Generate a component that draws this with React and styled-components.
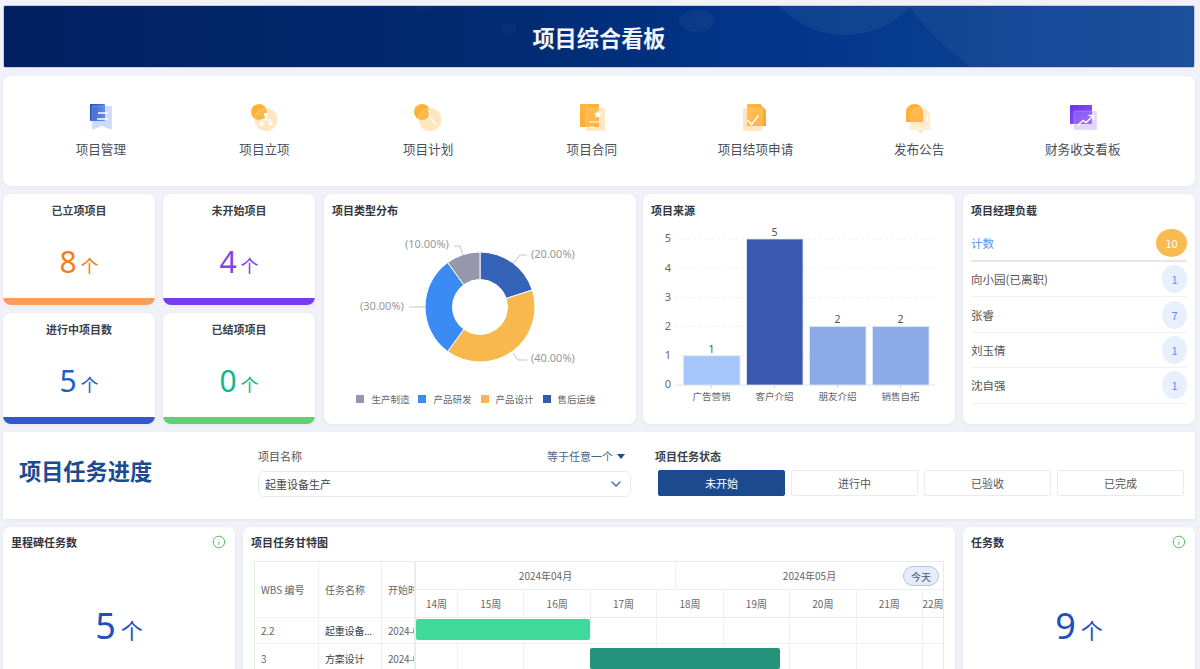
import React from 'react';
import styled, { createGlobalStyle } from 'styled-components';
import { Info, ChevronDown } from 'lucide-react';

const FONT = '"Noto Sans CJK SC", "Noto Sans", sans-serif';

const GlobalStyle = createGlobalStyle`
  html, body { margin: 0; padding: 0; height: 100%; overflow: hidden; background: #f0f2f8; }
  body { font-family: ${FONT}; color: #333; }
  * { box-sizing: border-box; }
`;

/* ---------- data ---------- */
const STATS = [
  { title: '已立项项目', value: 8, color: '#f97a1c', bar: '#f99d5c' },
  { title: '未开始项目', value: 4, color: '#7c45e8', bar: '#7c3aed' },
  { title: '进行中项目数', value: 5, color: '#2260c8', bar: '#3358c9' },
  { title: '已结项项目', value: 0, color: '#10b791', bar: '#62cf74' },
];

const SLICES = [
  { share: 0.2, color: '#3563b8' },
  { share: 0.4, color: '#f8b84e' },
  { share: 0.3, color: '#3b8bf5' },
  { share: 0.1, color: '#9696ad' },
];

const PIE_LABELS = [
  { text: '(20.00%)', x: 208, y: 31, line: '190,40 197,31 204,31' },
  { text: '(40.00%)', x: 208, y: 135, line: '190,129 195,136 204,136' },
  { text: '(30.00%)', x: 37, y: 83, line: '86,83 102,83' },
  { text: '(10.00%)', x: 82, y: 21, line: '131,22 137,22 140,31' },
];

const LEGEND = [
  { label: '生产制造', color: '#9696ad' },
  { label: '产品研发', color: '#3b8bf5' },
  { label: '产品设计', color: '#f8b84e' },
  { label: '售后运维', color: '#2f5bb0' },
];

const SOURCES = [
  { label: '广告营销', value: 1, color: '#a6c6fb' },
  { label: '客户介绍', value: 5, color: '#3a58b0' },
  { label: '朋友介绍', value: 2, color: '#8eabe9' },
  { label: '销售自拓', value: 2, color: '#8eabe9' },
];

const MANAGERS = [
  { name: '向小园(已离职)', count: 1 },
  { name: '张睿', count: 7 },
  { name: '刘玉倩', count: 1 },
  { name: '沈自强', count: 1 },
];

const WEEKS = ['14周', '15周', '16周', '17周', '18周', '19周', '20周', '21周', '22周'];

const TASKS = [
  { wbs: '2.2', name: '起重设备...', start: '2024-04-01', left: 0, width: 174, color: '#3fd99b' },
  { wbs: '3', name: '方案设计', start: '2024-04-29', left: 174, width: 190, color: '#24937c' },
];

/* ---------- icons ---------- */
const Svg = styled.svg`
  display: block;
  width: 32px;
  height: 32px;
`;

const OrangeGrad = ({ id }) => (
  <linearGradient id={id} x1="0" y1="0" x2="1" y2="1">
    <stop offset="0" stopColor="#ffb83c" />
    <stop offset="1" stopColor="#ffa526" />
  </linearGradient>
);

// pale shape under the solid one, then a faint copy on top for the frosted look
const Glass = ({ children }) => (
  <g fill="#fff" fillOpacity="0.14" stroke="#fff" strokeOpacity="0.4" strokeWidth="0.6">{children}</g>
);

const ManageIcon = () => (
  <Svg viewBox="0 0 32 32">
    <defs>
      <linearGradient id="blueDoc" x1="0" y1="0" x2="1" y2="0">
        <stop offset="0" stopColor="#2350c0" />
        <stop offset="1" stopColor="#4a7ae6" />
      </linearGradient>
    </defs>
    <path d="M7 4H27V28L17 24L7 28Z" fill="#c6d6fb" />
    <rect x="5" y="2" width="15" height="17" rx="0.8" fill="url(#blueDoc)" />
    <Glass><path d="M7 4H27V28L17 24L7 28Z" /></Glass>
    <path d="M13 11H23M12 17H23" stroke="#fff" strokeWidth="1.3" />
  </Svg>
);

const ApprovalIcon = () => (
  <Svg viewBox="0 0 32 32">
    <defs><OrangeGrad id="orangeA" /></defs>
    <circle cx="18" cy="17.5" r="11.5" fill="#ffe2b4" />
    <circle cx="11" cy="10" r="8" fill="url(#orangeA)" />
    <Glass><circle cx="18" cy="17.5" r="11.5" /></Glass>
    <path d="M18 14V18M13.5 21V18H22.5V21" stroke="#fff" strokeWidth="1.2" fill="none" />
    <rect x="16" y="11" width="4" height="3.6" rx="0.8" fill="#fff" />
    <rect x="11.5" y="20" width="4" height="3.4" rx="0.8" fill="#fff" />
    <rect x="20.5" y="20" width="4" height="3.4" rx="0.8" fill="#fff" />
  </Svg>
);

const PlanIcon = () => (
  <Svg viewBox="0 0 32 32">
    <defs><OrangeGrad id="orangeB" /></defs>
    <circle cx="18" cy="17.5" r="11.5" fill="#ffe2b4" />
    <circle cx="10" cy="10" r="8" fill="url(#orangeB)" />
    <Glass><circle cx="18" cy="17.5" r="11.5" /></Glass>
    <path d="M17 8L18 16L24 22" stroke="#fff" strokeWidth="1.5" fill="none" strokeLinecap="round" />
  </Svg>
);

const ContractIcon = () => (
  <Svg viewBox="0 0 32 32">
    <defs><OrangeGrad id="orangeC" /></defs>
    <rect x="10" y="6" width="19" height="23" rx="1" fill="#ffe2b4" />
    <rect x="4" y="2" width="19" height="23" rx="0.8" fill="url(#orangeC)" />
    <Glass><rect x="10" y="6" width="19" height="23" rx="1" /></Glass>
    <path d="M22 8l1.2 2.7 3 .3-2.2 2 .6 2.9-2.6-1.5-2.6 1.5.6-2.9-2.2-2 3-.3z" fill="#fff" />
    <path d="M13 20H25M13 25H18" stroke="#fff" strokeWidth="1.2" />
  </Svg>
);

const ClosureIcon = () => (
  <Svg viewBox="0 0 32 32">
    <defs><OrangeGrad id="orangeD" /></defs>
    <rect x="4" y="6" width="19" height="23" rx="1" fill="#ffe2b4" />
    <path d="M9 2H21L27 8V24H8V3Z" fill="url(#orangeD)" />
    <Glass><rect x="4" y="6" width="19" height="23" rx="1" /></Glass>
    <path d="M8.5 18L12.5 22.5L19.5 13.5" stroke="#fff" strokeWidth="1.5" fill="none" />
  </Svg>
);

const NoticeIcon = () => (
  <Svg viewBox="0 0 32 32">
    <defs><OrangeGrad id="orangeE" /></defs>
    <path d="M8 26V14a9.5 9 0 0 1 19 0V26Z" fill="#ffe8c4" />
    <path d="M3 20V10a8.5 8 0 0 1 17 0V20Z" fill="url(#orangeE)" />
    <Glass><path d="M8 26V14a9.5 9 0 0 1 19 0V26Z" /></Glass>
    <circle cx="18" cy="28.5" r="2.6" fill="#fde9c8" />
    <rect x="6" y="24" width="23" height="4" rx="2" fill="#fdeed6" />
    <path d="M24 14V20" stroke="#fff" strokeWidth="1.3" />
  </Svg>
);

const FinanceIcon = () => (
  <Svg viewBox="0 0 32 32">
    <defs>
      <linearGradient id="purpleDoc" x1="0" y1="0" x2="1" y2="1">
        <stop offset="0" stopColor="#6a2ff2" />
        <stop offset="1" stopColor="#8d5cf8" />
      </linearGradient>
    </defs>
    <rect x="7" y="9" width="23" height="19" rx="1" fill="#dccffb" />
    <rect x="3" y="3" width="22" height="19" rx="0.8" fill="url(#purpleDoc)" />
    <Glass><rect x="7" y="9" width="23" height="19" rx="1" /></Glass>
    <path d="M10.5 23.5L16 18.5L19 20.5L26 14M21.5 13.5H26.5V18" stroke="#fff" strokeWidth="1.5" fill="none" />
  </Svg>
);

const NAV = [
  { label: '项目管理', Icon: ManageIcon },
  { label: '项目立项', Icon: ApprovalIcon },
  { label: '项目计划', Icon: PlanIcon },
  { label: '项目合同', Icon: ContractIcon },
  { label: '项目结项申请', Icon: ClosureIcon },
  { label: '发布公告', Icon: NoticeIcon },
  { label: '财务收支看板', Icon: FinanceIcon },
];

/* ---------- charts ---------- */
const slicePath = (cx, cy, r, r0, from, to) => {
  const pt = (rad, a) => `${cx + rad * Math.sin(a)} ${cy - rad * Math.cos(a)}`;
  const large = to - from > Math.PI ? 1 : 0;
  return `M${pt(r, from)}A${r} ${r} 0 ${large} 1 ${pt(r, to)}L${pt(r0, to)}A${r0} ${r0} 0 ${large} 0 ${pt(r0, from)}Z`;
};

const DonutChart = () => {
  let angle = 0;
  return (
    <ChartSvg viewBox="0 0 312 166" $height={166} $left={-9}>
      {SLICES.map(s => {
        const from = angle;
        angle += s.share * Math.PI * 2;
        return <path key={s.color} d={slicePath(157, 83, 55, 27.5, from, angle)} fill={s.color} stroke="#fff" strokeWidth="1" />;
      })}
      {PIE_LABELS.map(l => (
        <g key={l.text}>
          <polyline points={l.line} fill="none" stroke="#c4c4c8" strokeWidth="1" />
          <text x={l.x} y={l.y} fill="#999" fontSize="11" dominantBaseline="middle" fontFamily="Noto Sans">{l.text}</text>
        </g>
      ))}
    </ChartSvg>
  );
};

const BarChart = () => {
  const y0 = 161;
  const unit = 29.2;
  return (
    <ChartSvg viewBox="0 0 312 178" $height={178} $left={-8}>
      {[1, 2, 3, 4, 5].map(v => (
        <line key={v} x1="32" x2="292" y1={y0 - v * unit} y2={y0 - v * unit} stroke="#f0f0f4" strokeDasharray="3 3" />
      ))}
      <line x1="32" x2="292" y1={y0} y2={y0} stroke="#e2e4ec" />
      {[0, 1, 2, 3, 4, 5].map(v => (
        <text key={v} x="28" y={y0 - v * unit + 0.5} fill="#666" fontSize="11" textAnchor="end" dominantBaseline="middle" fontFamily="Noto Sans">{v}</text>
      ))}
      {SOURCES.map((s, i) => {
        const x = 40.5 + i * 63;
        const h = s.value * unit;
        return (
          <g key={s.label}>
            <rect x={x} y={y0 - h} width="56.5" height={h} fill={s.color} stroke="#dfe8fb" strokeWidth="0.8" />
            <line x1={x + 28} x2={x + 28} y1={y0} y2={y0 + 3} stroke="#d0d4de" />
            <text x={x + 28} y={y0 - h - 6} fill="#555" fontSize="10.5" textAnchor="middle" dominantBaseline="middle" fontFamily="Noto Sans">{s.value}</text>
            <text x={x + 28} y={y0 + 12} fill="#666" fontSize="9.5" textAnchor="middle" dominantBaseline="middle">{s.label}</text>
          </g>
        );
      })}
    </ChartSvg>
  );
};

const App = () => (
  <>
    <GlobalStyle />
    <Page>
      <Banner>
        <BannerTitle>项目综合看板</BannerTitle>
      </Banner>

      <NavCard>
        {NAV.map(({ label, Icon }) => (
          <NavItem key={label}>
            <Icon />
            <NavLabel>{label}</NavLabel>
          </NavItem>
        ))}
      </NavCard>

      <Overview>
        <StatGrid>
          {STATS.map(s => (
            <StatCard key={s.title}>
              <StatTitle>{s.title}</StatTitle>
              <StatBody $color={s.color}>
                <StatValue>{s.value}</StatValue>
                <StatUnit>个</StatUnit>
              </StatBody>
              <StatBar $color={s.bar} />
            </StatCard>
          ))}
        </StatGrid>

        <ChartCard $after={7}>
          <CardTitle>项目类型分布</CardTitle>
          <DonutChart />
          <Legend>
            {LEGEND.map(l => (
              <LegendItem key={l.label}>
                <Swatch $color={l.color} />
                {l.label}
              </LegendItem>
            ))}
          </Legend>
        </ChartCard>

        <ChartCard $after={8}>
          <CardTitle>项目来源</CardTitle>
          <BarChart />
        </ChartCard>

        <ManagerCard>
          <CardTitle>项目经理负载</CardTitle>
          <TotalRow>
            <TotalLabel>计数</TotalLabel>
            <TotalBadge>10</TotalBadge>
          </TotalRow>
          {MANAGERS.map(m => (
            <ManagerRow key={m.name}>
              <span>{m.name}</span>
              <CountBadge>{m.count}</CountBadge>
            </ManagerRow>
          ))}
        </ManagerCard>
      </Overview>

      <FilterPanel>
        <SectionTitle>项目任务进度</SectionTitle>
        <SelectBlock>
          <FieldHead>
            <FieldLabel>项目名称</FieldLabel>
            <MatchMode>等于任意一个<Triangle /></MatchMode>
          </FieldHead>
          <SelectBox>
            起重设备生产
            <ChevronDown size={16} color="#3d5f94" strokeWidth={1.8} />
          </SelectBox>
        </SelectBlock>
        <StatusBlock>
          <StatusLabel>项目任务状态</StatusLabel>
          <StatusButtons>
            <StatusButton $active>未开始</StatusButton>
            <StatusButton>进行中</StatusButton>
            <StatusButton>已验收</StatusButton>
            <StatusButton>已完成</StatusButton>
          </StatusButtons>
        </StatusBlock>
      </FilterPanel>

      <BottomRow>
        <TallCard>
          <TitleRow>
            <CardTitle>里程碑任务数</CardTitle>
            <Info size={14} color="#5dbb63" strokeWidth={1.7} />
          </TitleRow>
          <BigCount>
            <BigValue>5</BigValue>
            <BigUnit>个</BigUnit>
          </BigCount>
        </TallCard>

        <GanttCard>
          <CardTitle>项目任务甘特图</CardTitle>
          <GanttTable>
            <TaskColumns>
              <TaskHead>WBS 编号</TaskHead>
              <TaskHead>任务名称</TaskHead>
              <TaskHead>开始时间</TaskHead>
              {TASKS.map(t => (
                <React.Fragment key={t.wbs}>
                  <TaskCell>{t.wbs}</TaskCell>
                  <TaskCell $dark>{t.name}</TaskCell>
                  <TaskCell>{t.start}</TaskCell>
                </React.Fragment>
              ))}
            </TaskColumns>
            <Timeline>
              <MonthRow>
                <MonthCell>2024年04月</MonthCell>
                <MonthCell>
                  2024年05月
                  <TodayPill>今天</TodayPill>
                </MonthCell>
              </MonthRow>
              <WeekRow>
                {WEEKS.map(w => <WeekCell key={w}>{w}</WeekCell>)}
              </WeekRow>
              {TASKS.map(t => (
                <BarRow key={t.wbs}>
                  {WEEKS.map(w => <BarCell key={w} />)}
                  <TaskBar $left={t.left} $width={t.width} $color={t.color} />
                </BarRow>
              ))}
            </Timeline>
          </GanttTable>
        </GanttCard>

        <TallCard>
          <TitleRow>
            <CardTitle>任务数</CardTitle>
            <Info size={14} color="#5dbb63" strokeWidth={1.7} />
          </TitleRow>
          <BigCount>
            <BigValue>9</BigValue>
            <BigUnit>个</BigUnit>
          </BigCount>
        </TallCard>
      </BottomRow>
    </Page>
  </>
);

const Page = styled.div`
  height: 669px;
  overflow: hidden;
  padding: 5px 5px 0 3px;
  display: flex;
  flex-direction: column;
  gap: 8px;
`;

const Banner = styled.header`
  position: relative;
  flex: 0 0 63px;
  display: flex;
  align-items: center;
  justify-content: center;
  overflow: hidden;
  border-radius: 2px;
  border: 1px solid #c4cde4;
  background:
    radial-gradient(ellipse 18px 11px at 693px 15px, rgba(255, 255, 255, 0.04) 98%, transparent 100%),
    radial-gradient(ellipse 8px 5px at 505px 23px, rgba(255, 255, 255, 0.025) 98%, transparent 100%),
    radial-gradient(ellipse 6px 4px at 419px 1px, rgba(255, 255, 255, 0.025) 98%, transparent 100%),
    linear-gradient(90deg, #012061 0%, #012c74 45%, #023488 62%, #0f4798 100%);
  &::before {
    content: '';
    position: absolute;
    left: 841px;
    top: -491px;
    width: 610px;
    height: 610px;
    border-radius: 50%;
    background: rgba(255, 255, 255, 0.05);
  }
  &::after {
    content: '';
    position: absolute;
    left: 751px;
    top: -151px;
    width: 180px;
    height: 180px;
    border-radius: 50%;
    background: rgba(255, 255, 255, 0.05);
  }
`;

const BannerTitle = styled.h1`
  position: relative;
  margin: 0;
  font-size: 22.2px;
  font-weight: 700;
  color: #f1f4fa;
  line-height: 30px;
`;

const Card = styled.section`
  background: #fff;
  border-radius: 8px;
  padding: 8px 8px 9px;
  box-shadow: 0 1px 4px rgba(30, 40, 90, 0.05);
  min-width: 0;
`;

const NavCard = styled(Card)`
  flex: 0 0 110px;
  display: grid;
  grid-template-columns: repeat(7, 163.67px);
  padding: 26px 0 0 16px;
`;

const NavItem = styled.div`
  display: flex;
  flex-direction: column;
  align-items: center;
  gap: 6px;
`;

const NavLabel = styled.span`
  font-size: 12.6px;
  line-height: 18px;
  color: #4b4f58;
`;

const Overview = styled.div`
  flex: 0 0 230px;
  display: flex;
`;

const StatGrid = styled.div`
  flex: 0 0 312px;
  margin-right: 9px;
  display: grid;
  grid-template-columns: 1fr 1fr;
  grid-template-rows: 1fr 1fr;
  gap: 8px;
`;

const ChartCard = styled(Card)`
  flex: 0 0 312px;
  margin-right: ${({ $after }) => $after}px;
`;

const ManagerCard = styled(Card)`
  flex: 0 0 232px;
`;

const StatCard = styled.div`
  display: flex;
  flex-direction: column;
  background: #fff;
  border-radius: 8px;
  overflow: hidden;
  box-shadow: 0 1px 4px rgba(30, 40, 90, 0.05);
`;

const StatTitle = styled.div`
  padding-top: 8px;
  text-align: center;
  font-size: 11px;
  line-height: 16px;
  font-weight: 700;
  color: #3b3f48;
`;

const StatBody = styled.div`
  flex: 1;
  display: flex;
  align-items: baseline;
  justify-content: center;
  gap: 4px;
  padding-top: 24px;
  color: ${({ $color }) => $color};
`;

const StatValue = styled.span`
  font-size: 30px;
  line-height: 40px;
  font-family: "Noto Sans", sans-serif;
`;

const StatUnit = styled.span`
  font-size: 18px;
  line-height: 24px;
`;

const StatBar = styled.div`
  flex: 0 0 7px;
  background: ${({ $color }) => $color};
`;

const CardTitle = styled.h3`
  margin: 0;
  font-size: 11px;
  line-height: 16px;
  font-weight: 700;
  color: #33363e;
`;

const ChartSvg = styled.svg`
  display: block;
  width: 312px;
  height: ${({ $height }) => $height}px;
  margin: 6px 0 0 ${({ $left }) => $left}px;
  font-family: ${FONT};
`;

const Legend = styled.div`
  display: flex;
  justify-content: center;
  gap: 9px;
  margin-top: 2px;
  padding-right: 8px;
`;

const LegendItem = styled.span`
  display: flex;
  align-items: center;
  gap: 7px;
  font-size: 9.5px;
  line-height: 14px;
  color: #666;
`;

const Swatch = styled.i`
  width: 8px;
  height: 8px;
  background: ${({ $color }) => $color};
`;

const TotalRow = styled.div`
  display: flex;
  align-items: center;
  justify-content: space-between;
  height: 36px;
  margin-top: 8px;
  padding-bottom: 1px;
  border-bottom: 2px solid #e5e5ea;
`;

const TotalLabel = styled.span`
  font-size: 11.5px;
  color: #5b8ff9;
`;

const TotalBadge = styled.span`
  width: 31px;
  height: 28px;
  border-radius: 50%;
  display: flex;
  align-items: center;
  justify-content: center;
  background: #f8bb50;
  color: #fff;
  font-size: 11px;
`;

const ManagerRow = styled.div`
  display: flex;
  align-items: center;
  justify-content: space-between;
  height: 35.4px;
  border-bottom: 1px solid #f1f1f4;
  font-size: 11.5px;
  color: #555;
`;

const CountBadge = styled.span`
  width: 25px;
  height: 28px;
  border-radius: 50%;
  display: flex;
  align-items: center;
  justify-content: center;
  background: #e8f0fe;
  color: #5b8ff9;
  font-size: 11px;
`;

const FilterPanel = styled.section`
  flex: 0 0 87px;
  display: flex;
  padding: 16px 11px 0 16px;
  background: #fff;
  box-shadow: 0 1px 4px rgba(30, 40, 90, 0.06);
`;

const SectionTitle = styled.h2`
  flex: 0 0 239px;
  margin: -3px 0 0;
  font-size: 22.2px;
  line-height: 50px;
  font-weight: 700;
  color: #1d4b8f;
`;

const SelectBlock = styled.div`
  flex: 0 0 373px;
`;

const FieldHead = styled.div`
  display: flex;
  align-items: center;
  justify-content: space-between;
  height: 16px;
  margin-bottom: 7px;
  padding-right: 6px;
  font-size: 11px;
`;

const FieldLabel = styled.span`
  color: #555;
`;

const MatchMode = styled.span`
  display: flex;
  align-items: center;
  gap: 4px;
  color: #47648c;
`;

const Triangle = styled.i`
  width: 0;
  height: 0;
  border-left: 4.5px solid transparent;
  border-right: 4.5px solid transparent;
  border-top: 5px solid #1d4b8f;
`;

const SelectBox = styled.div`
  height: 26px;
  display: flex;
  align-items: center;
  justify-content: space-between;
  padding: 0 6px;
  border: 1px solid #e9ebf1;
  border-radius: 6px;
  font-size: 11px;
  color: #444;
`;

const StatusBlock = styled.div`
  flex: 1;
  margin-left: 24px;
`;

const StatusLabel = styled.div`
  height: 16px;
  margin-bottom: 6px;
  font-size: 11px;
  line-height: 16px;
  font-weight: 700;
  color: #3b3f48;
`;

const StatusButtons = styled.div`
  display: grid;
  grid-template-columns: repeat(4, 127px);
  gap: 6px;
  padding-left: 3px;
`;

const StatusButton = styled.div`
  height: 26px;
  display: flex;
  align-items: center;
  justify-content: center;
  border-radius: 2px;
  border: 1px solid ${({ $active }) => ($active ? '#1b4b8e' : '#e9ebf1')};
  background: ${({ $active }) => ($active ? '#1b4b8e' : '#fff')};
  color: ${({ $active }) => ($active ? '#fff' : '#555')};
  font-size: 11px;
`;

const BottomRow = styled.div`
  flex: 0 0 220px;
  display: grid;
  grid-template-columns: 232px 712px 232px;
  gap: 8px;
`;

const TallCard = styled(Card)`
  display: flex;
  flex-direction: column;
  padding-top: 7px;
`;

const TitleRow = styled.div`
  display: flex;
  align-items: center;
  justify-content: space-between;
  padding-right: 1px;
`;

const BigCount = styled.div`
  display: flex;
  align-items: baseline;
  justify-content: center;
  gap: 5px;
  margin-top: 52px;
  color: #1f4fbd;
`;

const BigValue = styled.span`
  font-size: 36px;
  line-height: 48px;
  font-family: "Noto Sans", sans-serif;
`;

const BigUnit = styled.span`
  font-size: 22px;
  line-height: 28px;
`;

const GanttCard = styled(Card)`
  padding: 7px 11px 0 8px;
`;

const GanttTable = styled.div`
  display: flex;
  margin: 11px 0 0 3px;
  border: 1px solid #e8e9ee;
  font-size: 10px;
  color: #666;
`;

const TaskColumns = styled.div`
  flex: 0 0 160px;
  display: grid;
  grid-template-columns: 64px 63px 33px;
  grid-template-rows: 56px 26px 60px;
`;

const TaskHead = styled.div`
  display: flex;
  align-items: center;
  padding-left: 6px;
  white-space: nowrap;
  overflow: hidden;
  border-right: 1px solid #eeeff3;
  border-bottom: 1px solid #eeeff3;
`;

const TaskCell = styled(TaskHead)`
  color: ${({ $dark }) => ($dark ? '#3b3f48' : '#666')};
  letter-spacing: -0.2px;
  &:nth-child(n + 7) {
    align-items: flex-start;
    padding-top: 7px;
  }
`;

const Timeline = styled.div`
  flex: 1;
  min-width: 0;
  border-left: 1px solid #e8e9ee;
`;

const MonthRow = styled.div`
  display: grid;
  grid-template-columns: 259px 1fr;
  height: 28px;
  padding-bottom: 1px;
  border-bottom: 1px solid #eeeff3;
`;

const MonthCell = styled.div`
  position: relative;
  display: flex;
  align-items: center;
  justify-content: center;
  & + & {
    border-left: 1px solid #eeeff3;
  }
`;

const TodayPill = styled.span`
  position: absolute;
  right: 4px;
  top: 4px;
  width: 36px;
  height: 20px;
  display: flex;
  align-items: center;
  justify-content: center;
  border-radius: 10px;
  background: #e6ecf6;
  border: 1px solid #b4c6e0;
  color: #3c5a85;
  font-size: 10px;
`;

const weekGrid = `
  display: grid;
  grid-template-columns: 41px repeat(7, 1fr) 21px;
`;

const WeekRow = styled.div`
  ${weekGrid}
  height: 28px;
  border-bottom: 1px solid #e8e9ee;
`;

const WeekCell = styled.div`
  display: flex;
  align-items: center;
  justify-content: center;
  white-space: nowrap;
  border-left: 1px solid #eeeff3;
  &:first-child {
    border-left: 0;
  }
`;

const BarRow = styled.div`
  ${weekGrid}
  position: relative;
  height: 26px;
  border-bottom: 1px solid #f0f1f4;
  & + & {
    height: 60px;
  }
`;

const BarCell = styled.div`
  border-left: 1px solid #f0f1f4;
  &:first-child {
    border-left: 0;
  }
`;

const TaskBar = styled.div`
  position: absolute;
  top: 1px;
  height: 21px;
  left: ${({ $left }) => $left}px;
  width: ${({ $width }) => $width}px;
  border-radius: 2px;
  background: ${({ $color }) => $color};
  ${BarRow} + ${BarRow} & {
    top: 4px;
  }
`;

export default App;
